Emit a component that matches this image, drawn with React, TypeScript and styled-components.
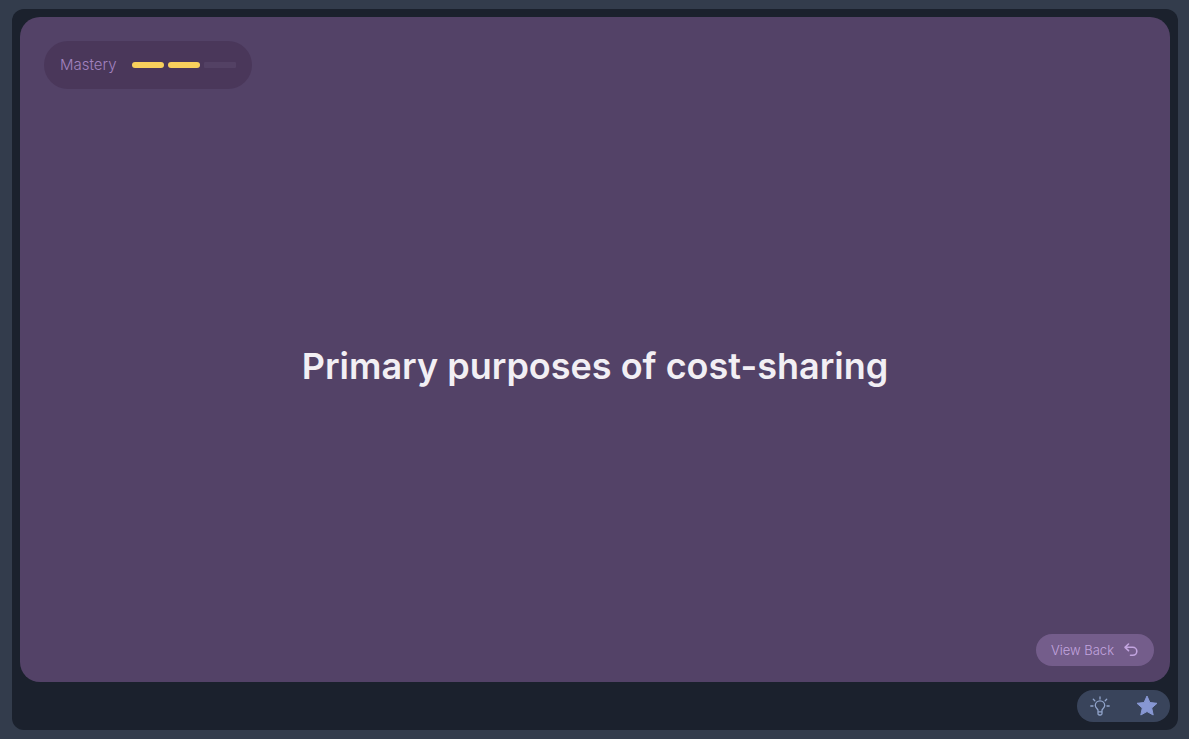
import React from "react";
import styled, { createGlobalStyle } from "styled-components";

const GlobalStyle = createGlobalStyle`
  *, *::before, *::after { box-sizing: border-box; }
  body {
    margin: 0;
    background: #333c4c;
    font-family: Inter, "Liberation Sans", sans-serif;
  }
  button { font: inherit; border: 0; cursor: pointer; }
`;

const Page = styled.main`
  display: flex;
  min-height: 100vh;
  padding: 9px 11px 9px 12px;
`;

const Panel = styled.section`
  flex: 1;
  display: flex;
  flex-direction: column;
  gap: 8px;
  padding: 8px;
  border-radius: 12px;
  background: #1b212d;
`;

const Card = styled.article`
  flex: 1;
  display: grid;
  grid-template-rows: 1fr auto 1fr;
  padding: 24px 16px 16px 24px;
  border-radius: 20px;
  background: #534267;
`;

const Mastery = styled.div`
  align-self: start;
  justify-self: start;
  display: flex;
  align-items: center;
  gap: 12px;
  height: 48px;
  padding: 0 16px;
  border-radius: 24px;
  background: #4a375a;
`;

const MasteryLabel = styled.span`
  min-width: 60px;
  color: #a182bf;
  font-size: 15px;
  font-weight: 300;
  line-height: 20px;
`;

const Segments = styled.div`
  display: flex;
  gap: 4px;
`;

const Segment = styled.span<{ $filled?: boolean }>`
  width: 32px;
  height: 6px;
  border-radius: ${(p) => (p.$filled ? "3px" : "1px")};
  background: ${(p) => (p.$filled ? "#f8d05c" : "#534164")};
`;

const Term = styled.h1`
  margin: 0;
  padding: 24px 8px 0 0;
  color: #f2eff4;
  font-size: 36px;
  font-weight: 600;
  line-height: 48px;
  text-align: center;
`;

const FlipButton = styled.button`
  align-self: end;
  justify-self: end;
  display: flex;
  align-items: center;
  gap: 10px;
  height: 32px;
  padding: 0 16px 0 15px;
  border-radius: 16px;
  background: #745d8b;
  color: #c2a4df;
  font-size: 13px;
  font-weight: 300;
  line-height: 20px;
`;

const Actions = styled.div`
  align-self: flex-end;
  display: flex;
  gap: 1px;
  border-radius: 16px;
  background: #39445b;
  overflow: hidden;
`;

const IconButton = styled.button`
  display: grid;
  place-items: center;
  width: 46px;
  height: 32px;
  padding: 0;
  background: transparent;
  color: #91a4cb;
`;

const FlipIcon = () => (
  <svg width="14" height="14" viewBox="0 0 14 14" fill="none" stroke="currentColor" strokeWidth="1.6" strokeLinecap="round" strokeLinejoin="round" aria-hidden="true">
    <path d="M4.500 1 1 4.300 4.500 7.600M1 4.300h7.800a4 4 0 0 1 0 8H6.500" />
  </svg>
);

const BulbIcon = () => (
  <svg width="20" height="20" viewBox="0 0 20 20" fill="none" stroke="currentColor" strokeWidth="1.3" strokeLinecap="round" strokeLinejoin="round" aria-hidden="true">
    <path d="M8 15.800v-1.600c0-1.100-2.700-2.200-2.700-4.700a4.700 4.700 0 0 1 9.400 0c0 2.500-2.700 3.600-2.700 4.700v3.300q0 1.500-1.500 1.500h-1q-1.500 0-1.500-1.500zM8 15.800h4" />
    <path d="M10 .8v2.300M3.300 3.300l1.500 1.500M16.700 3.300l-1.500 1.500M.8 10h2.200M17 10h2.200" />
  </svg>
);

const StarIcon = () => (
  <svg width="22" height="22" viewBox="0 0 22 22" fill="#8797d3" stroke="#8797d3" strokeWidth="1" strokeLinejoin="round" aria-hidden="true">
    <path d="m11 1 2.900 6.500 7.100.8-5.300 4.700 1.500 7-6.200-3.500L4.800 20l1.500-7L1 8.300l7.100-.8z" />
  </svg>
);

export default function App() {
  return (
    <>
      <GlobalStyle />
      <Page>
        <Panel>
          <Card>
            <Mastery>
              <MasteryLabel>Mastery</MasteryLabel>
              <Segments role="img" aria-label="2 of 3">
                <Segment $filled />
                <Segment $filled />
                <Segment />
              </Segments>
            </Mastery>
            <Term>Primary purposes of cost-sharing</Term>
            <FlipButton type="button">
              View Back
              <FlipIcon />
            </FlipButton>
          </Card>
          <Actions>
            <IconButton type="button" aria-label="Hint">
              <BulbIcon />
            </IconButton>
            <IconButton type="button" aria-label="Star">
              <StarIcon />
            </IconButton>
          </Actions>
        </Panel>
      </Page>
    </>
  );
}
